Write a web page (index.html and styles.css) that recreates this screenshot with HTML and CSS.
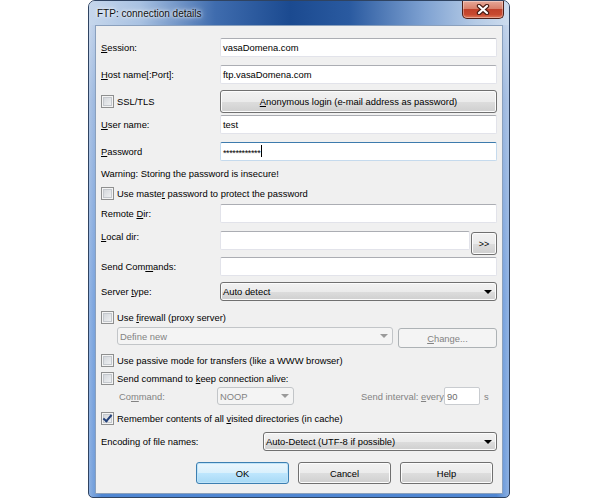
FILE: index.html
```html
<!DOCTYPE html>
<html lang="en">
<head>
  <meta charset="UTF-8">
  <title>FTP: connection details</title>
  <link rel="stylesheet" href="styles.css">
</head>
<body>
  <div class="window">
    <div class="titlebar">
      <span class="title">FTP: connection details</span>
      <span class="close">
        <svg width="14" height="11" viewBox="0 0 14 11">
          <path d="M3 2 L11 9 M11 2 L3 9" stroke="#4a1c14" stroke-width="4.4" stroke-linecap="round"/>
          <path d="M3 2 L11 9 M11 2 L3 9" stroke="#fff" stroke-width="2.2" stroke-linecap="round"/>
        </svg>
      </span>
    </div>

    <div class="client">
      <div class="row">
        <span class="lbl"><u>S</u>ession:</span>
        <div class="edit">vasaDomena.com</div>
      </div>

      <div class="row mt7">
        <span class="lbl"><u>H</u>ost name[:Port]:</span>
        <div class="edit">ftp.vasaDomena.com</div>
      </div>

      <div class="row tall mt6">
        <span class="lbl check"><span class="cb"></span><span>SSL/TLS</span></span>
        <div class="btn wide"><span><u>A</u>nonymous login (e-mail address as password)</span></div>
      </div>

      <div class="row mt1">
        <span class="lbl"><u>U</u>ser name:</span>
        <div class="edit">test</div>
      </div>

      <div class="row mt7">
        <span class="lbl"><u>P</u>assword</span>
        <div class="edit focus"><span class="dots">************</span><span class="caret"></span></div>
      </div>

      <div class="line mt2"><span>Warning: Storing the password is insecure!</span></div>

      <div class="line check"><span class="cb"></span><span>Use maste<u>r</u> password to protect the password</span></div>

      <div class="row h19 mt1">
        <span class="lbl">Remote <u>D</u>ir:</span>
        <div class="edit"></div>
      </div>

      <div class="row local mt8">
        <span class="lbl"><u>L</u>ocal dir:</span>
        <div class="edit"></div>
        <div class="btn more">&gt;&gt;</div>
      </div>

      <div class="row h19 mt2">
        <span class="lbl">Send Com<u>m</u>ands:</span>
        <div class="edit"></div>
      </div>

      <div class="row h19 mt6">
        <span class="lbl">Server <u>t</u>ype:</span>
        <div class="combo"><span>Auto detect</span><span class="arrow"></span></div>
      </div>

      <div class="line check mt6"><span class="cb"></span><span>Use <u>f</u>irewall (proxy server)</span></div>

      <div class="row firewall">
        <div class="combo off define"><span>Define new</span><span class="arrow"></span></div>
        <div class="btn off change"><span><u>C</u>hange...</span></div>
      </div>

      <div class="line short check mt3"><span class="cb"></span><span>Use passive mode for transfers (like a WWW browser)</span></div>

      <div class="line short check"><span class="cb"></span><span>Send command to <u>k</u>eep connection alive:</span></div>

      <div class="row keep">
        <span class="lbl off indent">Co<u>m</u>mand:</span>
        <div class="combo off noop"><span>NOOP</span><span class="arrow"></span></div>
        <span class="off interval">Send interval: <u>e</u>very</span>
        <div class="edit off secs">90</div>
        <span class="off unit">s</span>
      </div>

      <div class="line short check mt4"><span class="cb on"></span><span>Remember contents of all <u>v</u>isited directories (in cache)</span></div>

      <div class="row h19 mt5">
        <span class="lbl enc">Encodin<u>g</u> of file names:</span>
        <div class="combo"><span>Auto-Detect (UTF-8 if possible)</span><span class="arrow"></span></div>
      </div>

      <div class="buttons">
        <div class="btn dlg default">OK</div>
        <div class="btn dlg">Cancel</div>
        <div class="btn dlg">Help</div>
      </div>
    </div>
  </div>
</body>
</html>
```

FILE: styles.css
```css
body {
  margin: 0;
  background: #fff;
  font-family: "Liberation Sans", Arial, sans-serif;
  font-size: 9.4px;
  color: #000;
  display: flex;
  justify-content: center;
}

/* window frame */
.window {
  width: 422px;
  margin-right: 2px;
  box-sizing: border-box;
  border: 1px solid #2f4361;
  border-radius: 7px 7px 5px 5px;
  padding: 0 6px 3px;
  display: flex;
  flex-direction: column;
  background:
    linear-gradient(to right, rgba(255,255,255,0.35), rgba(255,255,255,0) 3%, rgba(255,255,255,0) 97%, rgba(255,255,255,0.35)),
    linear-gradient(to bottom, #b7cbe6 0, #86a8d8 20%, #5b8ed6 60%, #4f86d2 100%);
}

.titlebar {
  height: 24px;
  display: flex;
  align-items: flex-start;
  margin: 0 -6px;
  padding: 0 6px;
  border-radius: 6px 6px 0 0;
  background: linear-gradient(to right, #c6d7ec 0%, #a9c2e2 12%, #3f6cae 30%, #1b4a90 48%, #2a5aa0 62%, #7fa2d2 80%, #b5cbe6 92%, #cddcee 100%);
}

.title {
  padding: 7px 0 0 2px;
  font-size: 10px;
  color: #111;
  text-shadow: 0 0 6px #fff, 0 0 3px #fff;
}

.close {
  margin-left: auto;
  margin-right: -1px;
  width: 42px;
  height: 18px;
  box-sizing: border-box;
  border: 1px solid #4e1f18;
  border-top: none;
  border-radius: 0 0 5px 5px;
  background: linear-gradient(to bottom, #e6a898 0%, #d8806b 45%, #c0412a 50%, #c84a30 80%, #de7a5c 100%);
  box-shadow: inset 0 0 0 1px rgba(255,255,255,0.35);
  display: flex;
  align-items: center;
  justify-content: center;
}

/* client area */
.client {
  flex: 1;
  background: #f0f0f0;
  border: 1px solid #8aa0bd;
  padding: 11px 5px 9px 5px;
  display: flex;
  flex-direction: column;
}

.row {
  display: flex;
  align-items: center;
  height: 20px;
  white-space: nowrap;
}

.row.tall { height: 23px; }
.row.h19 { height: 19px; }

.mt1 { margin-top: 1px; }
.mt2 { margin-top: 2px; }
.mt3 { margin-top: 3px; }
.mt4 { margin-top: 4px; }
.mt5 { margin-top: 5px; }
.mt6 { margin-top: 6px; }
.mt7 { margin-top: 7px; }
.mt8 { margin-top: 8px; }

.lbl {
  width: 119px;
  flex: none;
}

.lbl.check {
  display: flex;
  align-items: center;
}

.lbl.enc { width: 162px; }

.line {
  height: 20px;
  display: flex;
  align-items: center;
  white-space: nowrap;
}

.line.short { height: 18px; }

.check .cb { margin-right: 3px; }

u { text-decoration: underline; text-underline-offset: 1px; }

/* text box */
.edit {
  flex: 1;
  height: 19px;
  box-sizing: border-box;
  background: #fff;
  border: 1px solid #e2e3ea;
  border-top-color: #abadb3;
  border-radius: 2px;
  padding: 0 2px;
  display: flex;
  align-items: center;
}

.edit.focus {
  border-color: #c5daed;
  border-top-color: #3d7bad;
}

.dots {
  font-size: 9px;
  letter-spacing: -0.4px;
  padding-top: 3px;
}

.caret {
  width: 1px;
  height: 12px;
  margin-left: 1px;
  background: #000;
}

/* checkbox */
.cb {
  width: 13px;
  height: 13px;
  box-sizing: border-box;
  flex: none;
  border: 1px solid #8e8f8f;
  background: linear-gradient(135deg, #cdd1d6, #f5f6f7);
  box-shadow: inset 0 0 0 1px #f4f4f4, inset 0 0 0 2px #c4c8cd;
  position: relative;
}

.cb.on::after {
  content: "";
  position: absolute;
  left: 3px;
  top: 0px;
  width: 3px;
  height: 7px;
  border: solid #23417a;
  border-width: 0 2px 2px 0;
  transform: rotate(40deg);
}

/* buttons */
.btn {
  box-sizing: border-box;
  border: 1px solid #707070;
  border-radius: 3px;
  background: linear-gradient(to bottom, #f2f2f2 0%, #ebebeb 50%, #dddddd 51%, #cfcfcf 100%);
  box-shadow: inset 0 0 0 1px #fcfcfc;
  display: flex;
  align-items: center;
  justify-content: center;
}

.btn.wide {
  flex: 1;
  height: 23px;
}

.row.local {
  height: 24px;
  align-items: flex-start;
}

.btn.more {
  width: 26px;
  height: 23px;
  margin-left: 1px;
  margin-top: 1px;
  font-size: 9px;
}

.btn.off {
  border-color: #adb2b5;
  background: #f4f4f4;
  box-shadow: none;
  color: #838383;
}

.buttons {
  display: flex;
  justify-content: flex-end;
  gap: 9px;
  margin-top: 11px;
  padding-right: 4px;
}

.btn.dlg {
  width: 93px;
  height: 22px;
}

.btn.default {
  border-color: #3c7fb1;
  background: linear-gradient(to bottom, #eaf6fd 0%, #d9f0fc 50%, #bee6fd 51%, #a7d9f5 100%);
  box-shadow: inset 0 0 0 1px #c0e4f9;
}

/* drop-down lists */
.combo {
  flex: 1;
  height: 19px;
  box-sizing: border-box;
  border: 1px solid #707070;
  border-radius: 3px;
  background: linear-gradient(to bottom, #f2f2f2 0%, #ebebeb 50%, #dddddd 51%, #cfcfcf 100%);
  box-shadow: inset 0 0 0 1px #fcfcfc;
  padding: 0 2px;
  display: flex;
  align-items: center;
}

.arrow {
  margin-left: auto;
  margin-right: 2px;
  width: 0;
  height: 0;
  border-left: 4px solid transparent;
  border-right: 4px solid transparent;
  border-top: 4px solid #000;
}

.combo.off {
  border-color: #c2c5c8;
  background: #f4f4f4;
  box-shadow: none;
  color: #838383;
}

.combo.off .arrow { border-top-color: #9a9a9a; }

.off { color: #838383; }

.row.firewall { height: 21px; align-items: flex-start; }

.combo.define {
  flex: none;
  width: 276px;
  height: 18px;
  margin-left: 16px;
}

.btn.change {
  width: 99px;
  height: 20px;
  margin-left: 5px;
  margin-top: 1px;
}

.row.keep { height: 18px; }

.lbl.indent {
  width: 98px;
  padding-left: 18px;
}

.combo.noop {
  flex: none;
  width: 77px;
  height: 18px;
}

.interval {
  width: 83px;
  margin-left: 67px;
}

.edit.secs {
  flex: none;
  width: 36px;
  height: 18px;
  color: #6d6d6d;
  border-color: #c9ccd0;
}

.unit { margin-left: 4px; }
```
